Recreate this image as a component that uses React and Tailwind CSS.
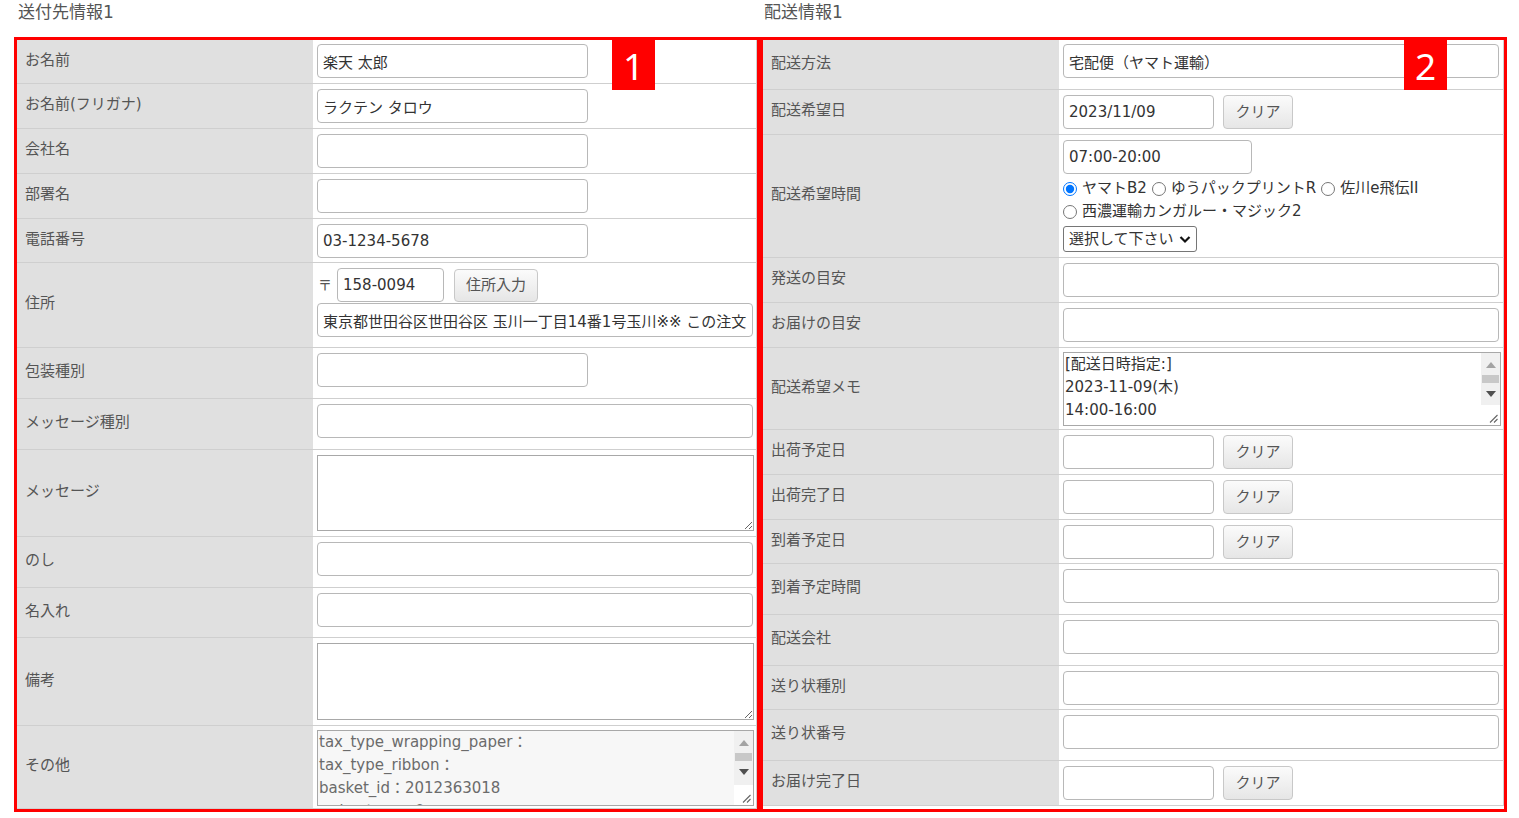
import React from "react";

const inputCls =
  "h-[34px] rounded-[4px] border border-[#b8b8b8] bg-white px-[5px] text-[15px] text-[#333] outline-none";
const btnCls =
  "rounded-[4px] border border-[#c8c8c8] bg-gradient-to-b from-[#fbfbfb] to-[#e6e6e6] text-[15px] text-[#555]";

const Row = ({ label, h, pt = "pt-[5px]", children }) => (
  <div className={`grid grid-cols-[296px_1fr] border-b border-[#cfcfcf] ${h}`}>
    <div className="flex items-center bg-[#e0e0e0] pb-[3px] pl-[8px] text-[15px] text-[#555]">{label}</div>
    <div className={`bg-white pl-[4px] ${pt}`}>{children}</div>
  </div>
);

const Narrow = ({ value = "" }) => (
  <input readOnly value={value} className={`${inputCls} w-[271px]`} />
);

const Full = ({ value = "" }) => (
  <input readOnly value={value} className={`${inputCls} w-[436px]`} />
);

const DateClear = ({ value = "" }) => (
  <div className="flex items-center gap-[9px]">
    <input readOnly value={value} className={`${inputCls} w-[151px]`} />
    <button className={`${btnCls} h-[34px] w-[70px]`}>クリア</button>
  </div>
);

const Badge = ({ n, pos }) => (
  <div
    className={`absolute top-0 flex h-[50px] w-[43px] items-center justify-center bg-[#ff0000] font-['Noto_Sans',sans-serif] text-[37px] leading-none text-white ${pos}`}
  >
    {n}
  </div>
);

const Radio = ({ label, checked }) => (
  <label className="mr-[5px] flex items-center text-[15px] text-[#333]">
    <input type="radio" name="carrier" defaultChecked={checked} className="m-0 mr-[5px] size-[14px]" />
    {label}
  </label>
);

// textarea with the old-style scrollbar and resize corner drawn beside it
const ScrollBox = ({ value, box, text }) => (
  <div className={`flex border border-[#a8a8a8] ${box}`}>
    <textarea
      readOnly
      value={value}
      className={`min-w-0 flex-1 resize-none overflow-hidden bg-transparent pl-[1px] text-[15px] leading-[23px] outline-none ${text}`}
    />
    <div className="flex w-[19px] flex-col">
      <div className="flex flex-1 flex-col items-center bg-[#f0f0f0] pt-[9px]">
        <svg width="10" height="6" viewBox="0 0 10 6">
          <path d="M0 6 L5 0 L10 6 Z" fill="#a3a3a3" />
        </svg>
        <div className="mt-[7px] h-[8px] w-[17px] bg-[#c8c8c8]" />
        <svg className="mt-[8px]" width="10" height="6" viewBox="0 0 10 6">
          <path d="M0 0 L10 0 L5 6 Z" fill="#505050" />
        </svg>
      </div>
      <div className="flex h-[20px] items-end justify-end bg-white pb-[2px] pr-[2px]">
        <svg width="10" height="10" viewBox="0 0 10 10">
          <path d="M9.5 2 L2 9.5 M9.5 6 L6 9.5" stroke="#666" strokeWidth="1.1" fill="none" />
        </svg>
      </div>
    </div>
  </div>
);

const sonotaText = [
  "tax_type_wrapping_paper：",
  "tax_type_ribbon：",
  "basket_id：2012363018",
  "order_type：0",
].join("\n");

const memoText = ["[配送日時指定:]", "2023-11-09(木)", "14:00-16:00"].join("\n");

export default function App() {
  return (
    <div className="min-h-screen bg-white font-['DejaVu_Sans','Noto_Sans_CJK_JP',sans-serif]">
      <div className="flex pl-[14px]">
        {/* 送付先情報 */}
        <div className="flex w-[746px] flex-col">
          <h2 className="h-[37px] pl-[4px] text-[17px] leading-[24px] text-[#555]">送付先情報1</h2>
          <div className="relative flex-1 border-[3px] border-[#ff0000]">
            <div className="border-r border-[#cfcfcf]">
              <Row label="お名前" h="h-[44px]" pt="pt-[4px]">
                <Narrow value="楽天 太郎" />
              </Row>
              <Row label="お名前(フリガナ)" h="h-[45px]">
                <Narrow value="ラクテン タロウ" />
              </Row>
              <Row label="会社名" h="h-[45px]">
                <Narrow />
              </Row>
              <Row label="部署名" h="h-[45px]">
                <Narrow />
              </Row>
              <Row label="電話番号" h="h-[44px]">
                <Narrow value="03-1234-5678" />
              </Row>
              <Row label="住所" h="h-[85px]">
                <div className="flex items-center">
                  <span className="pl-[1px] text-[14px] text-[#555]">〒</span>
                  <input readOnly value="158-0094" className={`${inputCls} ml-[5px] h-[33px] w-[107px]`} />
                  <button className={`${btnCls} ml-[10px] h-[33px] w-[84px]`}>住所入力</button>
                </div>
                <input
                  readOnly
                  value="東京都世田谷区世田谷区 玉川一丁目14番1号玉川※※ この注文は楽天テスト注文です"
                  className={`${inputCls} mt-[1px] w-[436px]`}
                />
              </Row>
              <Row label="包装種別" h="h-[51px]">
                <Narrow />
              </Row>
              <Row label="メッセージ種別" h="h-[51px]">
                <Full />
              </Row>
              <Row label="メッセージ" h="h-[87px]">
                <textarea className="block h-[76px] w-[437px] border border-[#a8a8a8] bg-white outline-none" />
              </Row>
              <Row label="のし" h="h-[51px]">
                <Full />
              </Row>
              <Row label="名入れ" h="h-[50px]">
                <Full />
              </Row>
              <Row label="備考" h="h-[88px]">
                <textarea className="block h-[77px] w-[437px] border border-[#a8a8a8] bg-white outline-none" />
              </Row>
              <Row label="その他" h="h-[83px]" pt="pt-[4px]">
                <ScrollBox value={sonotaText} box="h-[76px] w-[437px] bg-[#f7f7f7]" text="text-[#6b6b6b]" />
              </Row>
            </div>
            <Badge n="1" pos="left-[595px]" />
          </div>
        </div>

        {/* 配送情報 */}
        <div className="flex w-[747px] flex-col">
          <h2 className="h-[37px] pl-[4px] text-[17px] leading-[24px] text-[#555]">配送情報1</h2>
          <div className="relative flex-1 border-[3px] border-[#ff0000]">
            <div className="border-r border-[#cfcfcf]">
              <Row label="配送方法" h="h-[50px]" pt="pt-[4px]">
                <Full value="宅配便（ヤマト運輸）" />
              </Row>
              <Row label="配送希望日" h="h-[45px]">
                <DateClear value="2023/11/09" />
              </Row>
              <Row label="配送希望時間" h="h-[123px]">
                <input readOnly value="07:00-20:00" className={`${inputCls} h-[33px] w-[189px]`} />
                <div className="mt-[3px] flex flex-wrap leading-[23px]">
                  <Radio label="ヤマトB2" checked />
                  <Radio label="ゆうパックプリントR" />
                  <Radio label="佐川e飛伝II" />
                  <Radio label="西濃運輸カンガルー・マジック2" />
                </div>
                <div className="relative mt-[3px] w-[134px]">
                  <select className="h-[26px] w-[134px] appearance-none rounded-[3px] border border-[#767676] bg-white pl-[5px] text-[15px] text-[#333] outline-none">
                    <option>選択して下さい</option>
                  </select>
                  <svg
                    className="pointer-events-none absolute right-[6px] top-[9px]"
                    width="12"
                    height="9"
                    viewBox="0 0 12 9"
                  >
                    <path d="M1.5 2 L6 6.5 L10.5 2" fill="none" stroke="#111" strokeWidth="2.2" />
                  </svg>
                </div>
              </Row>
              <Row label="発送の目安" h="h-[45px]">
                <Full />
              </Row>
              <Row label="お届けの目安" h="h-[45px]">
                <Full />
              </Row>
              <Row label="配送希望メモ" h="h-[82px]" pt="pt-[4px]">
                <ScrollBox value={memoText} box="h-[74px] w-[438px] bg-white" text="text-[#333]" />
              </Row>
              <Row label="出荷予定日" h="h-[45px]">
                <DateClear />
              </Row>
              <Row label="出荷完了日" h="h-[45px]">
                <DateClear />
              </Row>
              <Row label="到着予定日" h="h-[44px]">
                <DateClear />
              </Row>
              <Row label="到着予定時間" h="h-[51px]">
                <Full />
              </Row>
              <Row label="配送会社" h="h-[51px]">
                <Full />
              </Row>
              <Row label="送り状種別" h="h-[44px]">
                <Full />
              </Row>
              <Row label="送り状番号" h="h-[51px]">
                <Full />
              </Row>
              <Row label="お届け完了日" h="h-[45px]">
                <DateClear />
              </Row>
            </div>
            <Badge n="2" pos="left-[641px]" />
          </div>
        </div>
      </div>
    </div>
  );
}
